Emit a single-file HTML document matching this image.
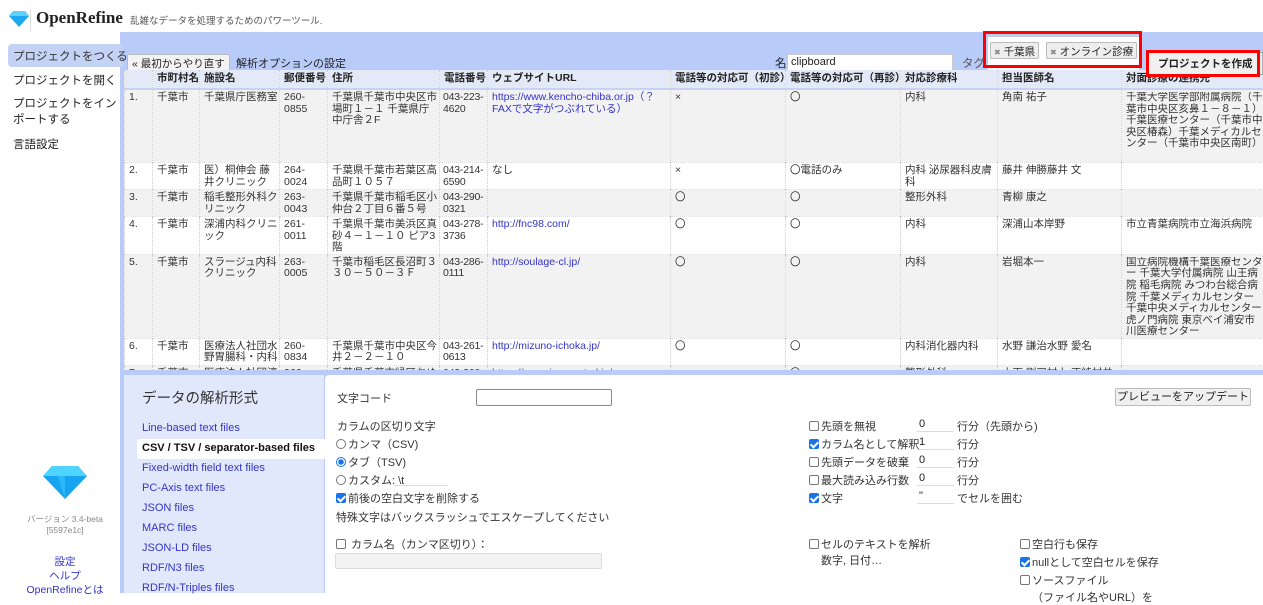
<!DOCTYPE html>
<html><head><meta charset="utf-8"><style>
*{box-sizing:border-box;margin:0;padding:0}
body{width:1263px;height:593px;overflow:hidden;background:#fff;position:relative;font-family:"Liberation Sans","Noto Sans CJK JP",sans-serif;color:#222;font-size:12px}
.a{position:absolute;white-space:nowrap}
#wrap{position:absolute;left:124px;top:70px;width:1139px;height:300px;overflow:hidden;background:#fff}
#tbl{border-collapse:collapse;table-layout:fixed;width:1139px;font-size:10.5px;line-height:11.6px;color:#333}
#tbl td,#tbl th{border-left:1px dotted #ccc;vertical-align:top;padding:2px 1px 0 4px;white-space:normal;overflow:hidden;overflow-wrap:anywhere;background:#fff}
#tbl td.nw{white-space:nowrap;padding-left:3px;padding-right:0;letter-spacing:-0.2px}
#tbl td div{overflow:hidden}
#tbl th{background:#e4e9f7;text-align:left;font-weight:bold;height:19px;border-bottom:2px solid #c6d3f3;white-space:nowrap;color:#222;padding-top:3px}
#tbl tr.g td{background:#f2f2f2}
#tbl tr td{border-top:1px dotted #ddd}
.l{color:#3333cc}
.lst{position:absolute;left:142px;font-size:11px;color:#3434c8}
.cb{display:inline-block;width:10px;height:10px;border:1px solid #777;border-radius:2px;vertical-align:-1px;margin-right:2px;background:#fff}
.cb.on{background:#1a73e8;border-color:#1a73e8;position:relative}
.cb.on:after{content:"";position:absolute;left:2px;top:0px;width:3px;height:6px;border:solid #fff;border-width:0 2px 2px 0;transform:rotate(45deg)}
.rd{display:inline-block;width:10px;height:10px;border:1px solid #777;border-radius:50%;vertical-align:-1px;margin-right:2px}
.rd.on{border:1px solid #1a73e8;background:radial-gradient(#1a73e8 2.5px,#fff 3px)}
.f{font-size:11px;color:#333}
.inp{position:absolute;border-bottom:1px solid #ddd;height:14px;font-size:11px;padding-left:2px}
</style></head><body>
<svg class="a" style="left:9px;top:11px" width="20" height="16" viewBox="0 0 20 16"><polygon points="4,0 16,0 20,5 10,16 0,5" fill="#1ea8f0"/><polygon points="4,0 16,0 20,5 0,5" fill="#5fd0ff"/></svg>
<div class="a" style="left:30px;top:9px;width:1px;height:22px;background:#ddd"></div>
<div class="a" style="left:36px;top:8px;font-family:'Liberation Serif',serif;font-weight:bold;font-size:17px;color:#222">OpenRefine</div>
<div class="a" style="left:130px;top:13px;font-size:9.5px;color:#555">乱雑なデータを処理するためのパワーツール.</div>

<div class="a" style="left:120px;top:32px;width:1143px;height:343px;background:#b9cbf9"></div>
<div class="a" style="left:8px;top:44px;width:115px;height:23px;background:#c4d2f5;border-radius:4px 0 0 4px"></div>
<div class="a" style="left:13px;top:48px;font-size:11.5px;color:#333">プロジェクトをつくる</div>
<div class="a" style="left:13px;top:72px;font-size:11.5px;color:#222">プロジェクトを開く</div>
<div class="a" style="left:13px;top:96px;font-size:11.5px;color:#222;line-height:16px;white-space:normal;width:107px">プロジェクトをインポートする</div>
<div class="a" style="left:13px;top:136px;font-size:11.5px;color:#222">言語設定</div>

<div class="a" style="left:127px;top:54px;height:17px;padding:1px 4px;background:#f3f3f3;border:1px solid #bbb;border-radius:2px;font-size:10.5px">« 最初からやり直す</div>
<div class="a" style="left:236px;top:55px;font-size:11px">解析オプションの設定</div>
<div class="a" style="left:775px;top:55px;font-size:11.5px">名</div>
<div class="a" style="left:787px;top:54px;width:166px;height:17px;background:#fff;border:1px solid #ccc;font-size:11px;padding:1px 3px">clipboard</div>
<div class="a" style="left:962px;top:55px;font-size:11.5px;color:#555">タグ</div>
<div class="a" style="left:987px;top:36px;width:153px;height:40px;background:#fff;border:1px solid #ccc"></div>
<div class="a" style="left:990px;top:42px;height:17px;padding:1px 3px;background:#eee;border:1px solid #bbb;border-radius:2px;font-size:10.5px"><span style="font-size:8px;color:#888">✖</span> 千葉県</div>
<div class="a" style="left:1046px;top:42px;height:17px;padding:1px 3px;background:#eee;border:1px solid #bbb;border-radius:2px;font-size:10.5px"><span style="font-size:8px;color:#888">✖</span> オンライン診療</div>
<div class="a" style="left:983px;top:31px;width:159px;height:37px;border:3px solid #f00"></div>

<div id="wrap"><table id="tbl">
<colgroup><col style="width:28px"><col style="width:47px"><col style="width:80px"><col style="width:48px"><col style="width:112px"><col style="width:48px"><col style="width:183px"><col style="width:115px"><col style="width:115px"><col style="width:97px"><col style="width:124px"><col style="width:142px"></colgroup>
<tr><th></th><th>市町村名</th><th>施設名</th><th>郵便番号</th><th>住所</th><th>電話番号</th><th>ウェブサイトURL</th><th>電話等の対応可（初診）</th><th>電話等の対応可（再診）</th><th>対応診療科</th><th>担当医師名</th><th>対面診療の連携先</th></tr>
<tr class="g"><td><div style="height:70px">1.</div></td><td>千葉市</td><td>千葉県庁医務室</td><td>260-<br>0855</td><td>千葉県千葉市中央区市場町１－１ 千葉県庁中庁舎２F</td><td class="nw">043-223-<br>4620</td><td class="l">https://www.kencho-chiba.or.jp（？ FAXで文字がつぶれている）</td><td>×</td><td>〇</td><td>内科</td><td>角南 祐子</td><td><div style="height:70px">千葉大学医学部附属病院（千葉市中央区亥鼻１－８－１）<br> 千葉医療センター（千葉市中央区椿森）千葉メディカルセンター（千葉市中央区南町）</div></td></tr>
<tr><td><div style="height:24px">2.</div></td><td>千葉市</td><td>医）桐伸会 藤井クリニック</td><td>264-<br>0024</td><td>千葉県千葉市若葉区高品町１０５７</td><td class="nw">043-214-<br>6590</td><td>なし</td><td>×</td><td>〇電話のみ</td><td>内科 泌尿器科皮膚科</td><td>藤井 伸勝藤井 文</td><td></td></tr>
<tr class="g"><td><div style="height:24px">3.</div></td><td>千葉市</td><td>稲毛整形外科クリニック</td><td>263-<br>0043</td><td>千葉県千葉市稲毛区小仲台２丁目６番５号</td><td class="nw">043-290-<br>0321</td><td></td><td>〇</td><td>〇</td><td>整形外科</td><td>青柳 康之</td><td></td></tr>
<tr><td><div style="height:34px">4.</div></td><td>千葉市</td><td>深浦内科クリニック</td><td>261-<br>0011</td><td>千葉県千葉市美浜区真砂４－１－１０ ピア3階</td><td class="nw">043-278-<br>3736</td><td class="l">http://fnc98.com/</td><td>〇</td><td>〇</td><td>内科</td><td>深浦山本岸野</td><td>市立青葉病院市立海浜病院</td></tr>
<tr class="g"><td><div style="height:81px">5.</div></td><td>千葉市</td><td>スラージュ内科クリニック</td><td>263-<br>0005</td><td>千葉市稲毛区長沼町３３０－５０－３Ｆ</td><td class="nw">043-286-<br>0111</td><td class="l">http://soulage-cl.jp/</td><td>〇</td><td>〇</td><td>内科</td><td>岩堀本一</td><td><div style="height:81px">国立病院機構千葉医療センター 千葉大学付属病院 山王病院 稲毛病院 みつわ台総合病院 千葉メディカルセンター 千葉中央メディカルセンター 虎ノ門病院 東京ベイ浦安市川医療センター</div></td></tr>
<tr><td><div style="height:24px">6.</div></td><td>千葉市</td><td>医療法人社団水野胃腸科・内科</td><td>260-<br>0834</td><td>千葉県千葉市中央区今井２－２－１０</td><td class="nw">043-261-<br>0613</td><td class="l">http://mizuno-ichoka.jp/</td><td>〇</td><td>〇</td><td>内科消化器内科</td><td>水野 謙治水野 愛名</td><td></td></tr>
<tr class="g"><td><div style="height:24px">7.</div></td><td>千葉市</td><td>医療法人社団淳</td><td>266-</td><td>千葉県千葉市緑区おゆ</td><td class="nw">043-300-</td><td class="l">https://oyumino-central.jp/</td><td>○</td><td>〇</td><td>整形外科</td><td>山下 剛司村上 正純村井 恒</td><td></td></tr>
</table></div>
<div class="a" style="left:1148px;top:52px;width:115px;height:23px;background:#f0f0f0;border:1px solid #aaa"></div>
<div class="a" style="left:1158px;top:56px;font-size:10.5px;font-weight:bold">プロジェクトを作成</div>
<div class="a" style="left:1146px;top:50px;width:114px;height:27px;border:3px solid #f00"></div>

<div class="a" style="left:120px;top:370px;width:1143px;height:223px;background:#b9cbf9"></div>
<div class="a" style="left:124px;top:375px;width:200px;height:218px;background:#e2e8fb"></div>
<div class="a" style="left:325px;top:375px;width:938px;height:218px;background:#fff;border-top-left-radius:4px"></div>
<div class="a" style="left:142px;top:387px;font-size:14.5px;color:#333">データの解析形式</div>
<div class="lst" style="top:422px">Line-based text files</div>
<div class="a" style="left:137px;top:439px;width:188px;height:20px;background:#fff;border-radius:3px 0 0 3px"></div>
<div class="lst" style="top:442px;color:#111;font-weight:bold;left:142px">CSV / TSV / separator-based files</div>
<div class="lst" style="top:462px">Fixed-width field text files</div>
<div class="lst" style="top:482px">PC-Axis text files</div>
<div class="lst" style="top:502px">JSON files</div>
<div class="lst" style="top:522px">MARC files</div>
<div class="lst" style="top:542px">JSON-LD files</div>
<div class="lst" style="top:562px">RDF/N3 files</div>
<div class="lst" style="top:582px">RDF/N-Triples files</div>

<svg class="a" style="left:43px;top:466px" width="44" height="33" viewBox="0 0 44 33"><polygon points="9,0 35,0 44,10 22,33 0,10" fill="#16a4f0"/><polygon points="9,0 35,0 44,10 0,10" fill="#4fd3ff"/><polygon points="22,10 15,10 22,33" fill="#2ab8f8"/></svg>
<div class="a" style="left:0;top:514px;width:130px;text-align:center;font-size:8.5px;color:#888;line-height:11px">バージョン 3.4-beta<br>[5597e1c]</div>
<div class="a" style="left:0;top:555px;width:130px;text-align:center;font-size:10.5px;color:#3333cc;line-height:14px">設定<br>ヘルプ<br>OpenRefineとは</div>

<div class="a f" style="left:337px;top:390px">文字コード</div>
<div class="a" style="left:476px;top:389px;width:136px;height:17px;border:1px solid #888;border-radius:2px"></div>
<div class="a f" style="left:337px;top:418px">カラムの区切り文字</div>
<div class="a f" style="left:336px;top:436px"><span class="rd"></span>カンマ（CSV)</div>
<div class="a f" style="left:336px;top:454px"><span class="rd on"></span>タブ（TSV)</div>
<div class="a f" style="left:336px;top:472px"><span class="rd"></span>カスタム: \t</div>
<div class="a" style="left:394px;top:485px;width:54px;border-bottom:1px solid #ddd"></div>
<div class="a f" style="left:336px;top:490px"><span class="cb on"></span>前後の空白文字を削除する</div>
<div class="a f" style="left:336px;top:509px">特殊文字はバックスラッシュでエスケープしてください</div>
<div class="a f" style="left:336px;top:536px"><span class="cb"></span> カラム名（カンマ区切り）：</div>
<div class="a" style="left:335px;top:553px;width:267px;height:16px;background:#f3f3f3;border:1px solid #ddd;border-radius:2px"></div>

<div class="a" style="left:1115px;top:388px;width:136px;height:18px;background:#f0f0f0;border:1px solid #bbb;border-radius:2px;font-size:11px;text-align:center;line-height:16px">プレビューをアップデート</div>
<div class="a f" style="left:809px;top:418px"><span class="cb"></span>先頭を無視</div>
<div class="a f" style="left:809px;top:436px"><span class="cb on"></span>カラム名として解釈</div>
<div class="a f" style="left:809px;top:454px"><span class="cb"></span>先頭データを破棄</div>
<div class="a f" style="left:809px;top:472px"><span class="cb"></span>最大読み込み行数</div>
<div class="a f" style="left:809px;top:490px"><span class="cb on"></span>文字</div>
<div class="inp" style="left:917px;top:418px;width:37px">0</div>
<div class="inp" style="left:917px;top:436px;width:37px">1</div>
<div class="inp" style="left:917px;top:454px;width:37px">0</div>
<div class="inp" style="left:917px;top:472px;width:37px">0</div>
<div class="inp" style="left:917px;top:490px;width:37px">"</div>
<div class="a f" style="left:957px;top:418px">行分（先頭から)</div>
<div class="a f" style="left:957px;top:436px">行分</div>
<div class="a f" style="left:957px;top:454px">行分</div>
<div class="a f" style="left:957px;top:472px">行分</div>
<div class="a f" style="left:957px;top:490px">でセルを囲む</div>
<div class="a f" style="left:809px;top:536px"><span class="cb"></span>セルのテキストを解析</div>
<div class="a f" style="left:821px;top:552px">数字, 日付…</div>
<div class="a f" style="left:1020px;top:536px"><span class="cb"></span>空白行も保存</div>
<div class="a f" style="left:1020px;top:554px"><span class="cb on"></span>nullとして空白セルを保存</div>
<div class="a f" style="left:1020px;top:572px"><span class="cb"></span>ソースファイル</div>
<div class="a f" style="left:1032px;top:589px">（ファイル名やURL）を</div>
</body></html>
